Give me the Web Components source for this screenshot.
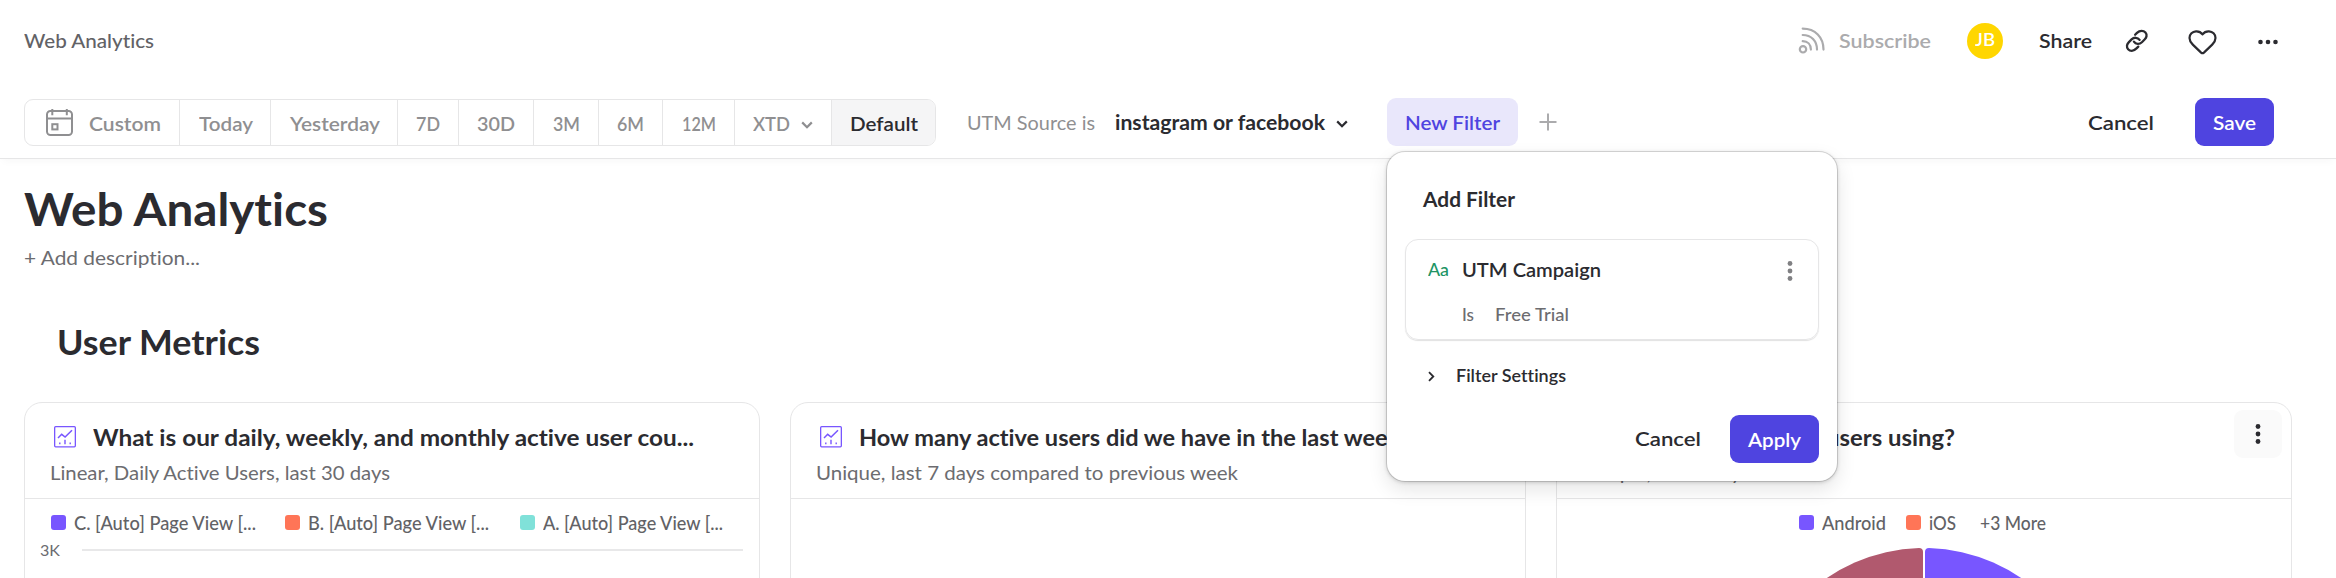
<!DOCTYPE html>
<html lang="en">
<head>
<meta charset="utf-8">
<title>Web Analytics</title>
<style>
  html, body { margin: 0; height: 100%; overflow: hidden; background: #fff; }
  body { font-family: Lato, "Open Sans", sans-serif; font-size: 20px; font-variant-ligatures: none; color: #2b2b30; }
</style>
</head>
<body>
<analytics-page></analytics-page>
<script>
const define = (name, html, ready) => {
  const tpl = document.createElement('template');
  tpl.innerHTML = html;
  customElements.define(name, class extends HTMLElement {
    constructor() {
      super();
      this.attachShadow({ mode: 'open' }).append(tpl.content.cloneNode(true));
    }
    connectedCallback() { if (ready) ready(this, this.shadowRoot); }
  });
};

/* Label stretched to fill a given width: w = width, s = font size, wt = weight, l = left gap */
define('fit-label', `
  <style>
    :host { display: block; flex: none; white-space: nowrap; }
    span { display: inline-block; margin-left: -.5px; transform-origin: 0 50%; }
  </style><span><slot></slot></span>`, (el, root) => {
  const span = root.querySelector('span');
  const w = parseFloat(el.getAttribute('w'));
  if (el.hasAttribute('s')) el.style.fontSize = el.getAttribute('s') + 'px';
  if (el.hasAttribute('wt')) el.style.fontWeight = el.getAttribute('wt');
  if (el.hasAttribute('l')) el.style.marginLeft = el.getAttribute('l') + 'px';
  el.style.width = w + 'px';
  const fit = () => {
    span.style.transform = 'none';
    const natural = span.getBoundingClientRect().width;
    if (natural) span.style.transform = 'scaleX(' + ((w + 1) / natural).toFixed(4) + ')';
  };
  requestAnimationFrame(fit);
  queueMicrotask(fit);
});

const ICONS = {
  calendar: [27, 27, '<g fill="none" stroke="currentColor" stroke-width="2"><rect x="1" y="2" width="25" height="24" rx="3.5"/><path d="M1 9.5h25M6.3 0v6.3M20.8 0v6.3"/><rect x="6.3" y="15.2" width="5.2" height="5.2"/></g>'],
  chevron: [12, 8, '<path d="M1.2 1.4 6 6.2l4.800-4.800" fill="none" stroke="currentColor" stroke-width="2.2"/>'],
  right: [7, 11, '<path d="M1 1.200 5.300 5.500 1 9.800" fill="none" stroke="currentColor" stroke-width="1.800"/>'],
  plus: [18, 18, '<path d="M9 .5v17M.5 9h17" fill="none" stroke="currentColor" stroke-width="2"/>'],
  rss: [28, 28, '<g fill="none" stroke="currentColor" stroke-width="2.200" stroke-linecap="round"><circle cx="5" cy="22.300" r="3.200"/><path d="M4.700 1.600c12.500 0 20.800 8.500 20.800 21M4.700 8c8.500 0 14.300 6 14.300 14.600M4.700 14.200c5 0 8.200 3.500 8.200 8.400"/></g>'],
  link: [24, 24, '<g fill="none" stroke="currentColor" stroke-width="2.300" stroke-linecap="round"><path d="M10.100 5.800l1.900-1.900c1.300-1.300 2.600-2.100 4.600-2.100 3.200 0 5.400 2.500 4.900 5.400-.2 1.300-.9 2.300-1.900 3.300l-2.700 2.700c-2.400 2.300-6.100 2.200-8-.5"/><path d="M13.300 17.600l-1.800 1.800c-1.300 1.300-2.600 2.400-4.700 2.400-3 0-5.200-2.400-4.800-5.300.2-1.400.9-2.400 1.900-3.400l2.700-2.700c2.400-2.300 6.100-2.200 8 .5"/></g>'],
  heart: [29, 25, '<path d="M14.500 4.300C12.400 1.500 9.700 1.200 8 1.300 4.400 1.500 1.500 4.300 1.500 8c0 2.900 1.500 4.800 3.300 6.600l8.300 8c.9.8 1.900.8 2.800 0l8.300-8c1.800-1.800 3.300-3.700 3.300-6.600 0-3.700-2.900-6.500-6.500-6.700-1.700-.1-4.400.2-6.500 3z" fill="none" stroke="currentColor" stroke-width="2.200" stroke-linejoin="round"/>'],
  more: [20, 6, '<g fill="currentColor"><circle cx="2.500" cy="3" r="2.300"/><circle cx="10" cy="3" r="2.300"/><circle cx="17.500" cy="3" r="2.300"/></g>'],
  kebab: [6, 20, '<g fill="currentColor"><circle cx="3" cy="2.500" r="2.400"/><circle cx="3" cy="10" r="2.400"/><circle cx="3" cy="17.500" r="2.400"/></g>'],
  chart: [22, 22, '<g fill="none" stroke="currentColor"><rect x=".65" y=".65" width="20.700" height="20.200" rx="1" stroke-width="1.300"/><path d="M4 12l3.700-3.700 3.400 2.700L18 4.200" stroke-width="1.500"/><path d="M5.800 16.400v1.800M11 13.800v4.400M16.200 16.400v1.800" stroke-width="1.400"/></g>']
};
define('ui-icon', `<style>:host { display: block; flex: none; } svg { display: block; }</style><div></div>`, (el, root) => {
  const [w, h, body] = ICONS[el.getAttribute('name')];
  root.querySelector('div').innerHTML = `<svg width="${w}" height="${h}" viewBox="0 0 ${w} ${h}">${body}</svg>`;
});

define('ui-button', `
  <style>
    :host { display: flex; align-items: center; justify-content: center; flex: none; box-sizing: border-box;
      height: 48px; padding-bottom: 1px; border-radius: 9px; background: #4f44e0; color: #fff; font-weight: 600; }
    :host([soft]) { background: #e9e7fb; color: #4f44e0; }
  </style><slot></slot>`);

define('user-avatar', `
  <style>
    :host { display: flex; align-items: center; justify-content: center; width: 36px; height: 36px;
      border-radius: 50%; background: #ffd600; color: #fff; flex: none; }
  </style><slot></slot>`);

define('range-item', `
  <style>
    :host { display: flex; align-items: center; box-sizing: border-box; height: 45px; padding-top: 1px;
      border-right: 1px solid #e6e6e7; color: #8f8f91; font-weight: 600; }
    :host([selected]) { background: #f5f5f6; color: #2b2b30; border-right: 0; }
  </style><slot></slot>`);

define('range-picker', `
  <style>
    :host { display: flex; box-sizing: border-box; width: 912px; height: 47px; margin-top: 1px; flex: none;
      border: 1px solid #e6e6e7; border-radius: 9px; overflow: hidden; }
  </style>
  <range-item style="width:155px"><ui-icon name="calendar" style="margin-left:21px;margin-top:-1px"></ui-icon><fit-label w="71" l="16">Custom</fit-label></range-item>
  <range-item style="width:91px"><fit-label w="53" l="19">Today</fit-label></range-item>
  <range-item style="width:127px"><fit-label w="89" l="19">Yesterday</fit-label></range-item>
  <range-item style="width:61px"><fit-label w="23" l="18">7D</fit-label></range-item>
  <range-item style="width:75px"><fit-label w="37" l="18">30D</fit-label></range-item>
  <range-item style="width:65px"><fit-label w="26" l="19">3M</fit-label></range-item>
  <range-item style="width:64px"><fit-label w="26" l="18">6M</fit-label></range-item>
  <range-item style="width:72px"><fit-label w="33" l="19">12M</fit-label></range-item>
  <range-item style="width:97px"><fit-label w="36" l="18">XTD</fit-label><ui-icon name="chevron" style="margin-left:12px;margin-top:3px"></ui-icon></range-item>
  <range-item selected style="flex:1"><fit-label w="67" l="18">Default</fit-label></range-item>`);

define('page-header', `
  <style>
    :host { display: block; box-sizing: border-box; height: 159px; border-bottom: 1px solid #e6e6e7;
      box-shadow: 0 5px 8px -3px rgba(0,0,0,.035); background: #fff; }
    .row { display: flex; align-items: center; padding-left: 24px; }
    .top { height: 81px; font-weight: 600; }
    .top fit-label { margin-bottom: 2px; }
    .tools { height: 48px; margin-top: 17px; align-items: flex-start; }
    .group { display: flex; align-items: center; height: 48px; }
    .push { margin-left: auto; display: flex; align-items: center; }
    .muted { color: #8f8f91; }
    .dim { color: #ababad; display: flex; align-items: center; }
  </style>
  <div class="row top">
    <fit-label w="129" wt="500" style="color:#626266">Web Analytics</fit-label>
    <div class="push">
      <div class="dim"><ui-icon name="rss"></ui-icon><fit-label w="91" l="14">Subscribe</fit-label></div>
      <user-avatar style="margin-left:36px"><fit-label w="19" s="17" wt="600">JB</fit-label></user-avatar>
      <fit-label w="52" l="37">Share</fit-label>
      <ui-icon name="link" style="margin-left:33px;margin-top:1px"></ui-icon>
      <ui-icon name="heart" style="margin-left:39px;margin-top:3px"></ui-icon>
      <ui-icon name="more" style="margin-left:41px;margin-right:58.500px;margin-top:3px"></ui-icon>
    </div>
  </div>
  <div class="row tools">
    <range-picker></range-picker>
    <div class="group">
      <fit-label class="muted" w="127" l="31">UTM Source is</fit-label>
      <fit-label w="209" l="21.500" wt="700">instagram or facebook</fit-label>
      <ui-icon name="chevron" style="margin-left:11px;margin-top:3px"></ui-icon>
      <ui-button soft style="width:131px;margin-left:39.500px"><fit-label w="94">New Filter</fit-label></ui-button>
      <ui-icon name="plus" style="margin-left:21px;color:#ababad"></ui-icon>
    </div>
    <div class="group push">
      <fit-label w="65" wt="600">Cancel</fit-label>
      <ui-button style="width:79px;margin-left:42px;margin-right:62px"><fit-label w="42">Save</fit-label></ui-button>
    </div>
  </div>`);

define('report-card', `
  <style>
    :host { display: block; box-sizing: border-box; height: 400px; border: 1px solid #e6e6e7; border-radius: 18px; background: #fff; }
    header { display: flex; justify-content: space-between; box-sizing: border-box; height: 96px; border-bottom: 1px solid #e6e6e7; }
    .text { padding-top: 20px; }
    .title { display: flex; height: 28px; line-height: 28px; padding-left: 29px; }
    .title ui-icon { color: #7856ff; margin-top: 3px; }
    .sub { height: 26px; line-height: 26px; margin: 8px 0 0 25px; color: #6c6c70; }
  </style>
  <header>
    <div class="text">
      <div class="title"><ui-icon name="chart"></ui-icon><slot name="title"></slot></div>
      <div class="sub"><slot name="sub"></slot></div>
    </div>
    <slot name="action"></slot>
  </header>
  <slot></slot>`);

define('legend-row', `
  <style>
    :host { display: flex; align-items: center; box-sizing: border-box; height: 41px; padding-top: 6px;
      color: #626266; font-size: 18.500px; font-weight: 500; }
  </style><slot></slot>`);

define('legend-swatch', `<style>:host { display: block; flex: none; width: 15px; height: 15px; border-radius: 3px; }</style>`);

define('axis-line', `
  <style>
    :host { display: flex; align-items: center; height: 20px; line-height: 20px; color: #6c6c70; }
    i { display: block; width: 661px; height: 2px; margin-left: 23px; background: #e8e8e9; }
  </style><slot></slot><i></i>`);

define('pie-chart', `
  <style>:host { display: block; margin: 7.500px 0 0 194px; } svg { display: block; }</style>
  <svg width="346" height="346" viewBox="0 0 346 346">
    <path d="M174 4q0-4 4-4A172 172 0 0 1 345 172H174z" fill="#7856ff"/>
    <path d="M172 4q0-4-4-4A172 172 0 0 0 1 172H172z" fill="#b1596e"/>
  </svg>`);

define('card-menu', `
  <style>
    :host { display: flex; align-items: center; justify-content: center; width: 48px; height: 48px; margin: 7px 9px 0 0;
      border-radius: 9px; background: #fafafa; }
  </style><ui-icon name="kebab"></ui-icon>`);

define('filter-popup', `
  <style>
    :host { display: block; box-sizing: border-box; width: 450px; height: 329px; padding: 35px 18px 0; border-radius: 18px; background: #fff;
      box-shadow: 0 0 0 1px rgba(0,0,0,.13), 0 1px 4px rgba(0,0,0,.2), 0 8px 20px rgba(0,0,0,.11); }
    .row { display: flex; align-items: center; }
    .head { height: 24px; line-height: 24px; margin-left: 18px; }
    .box { box-sizing: border-box; height: 101px; margin-top: 28px; border: 1px solid #e6e6e7; border-radius: 13px;
      box-shadow: 0 1px 1px rgba(0,0,0,.12); }
    .prop { height: 28px; padding: 15px 25px 0 22px; }
    .prop ui-icon { margin-left: auto; color: #808083; margin-top: 4px; }
    .cond { height: 24px; margin-top: 19px; padding-left: 56px; color: #6c6c70; }
    .settings { height: 24px; margin: 23px 0 0 22.500px; }
    .actions { justify-content: flex-end; margin-top: 28px; }
    .actions > fit-label { margin-bottom: 2px; }
  </style>
  <div class="head"><fit-label w="91" wt="700">Add Filter</fit-label></div>
  <div class="box">
    <div class="row prop">
      <fit-label w="20" s="18" wt="500" style="color:#219464">Aa</fit-label>
      <fit-label w="138" l="14" wt="600">UTM Campaign</fit-label>
      <ui-icon name="kebab"></ui-icon>
    </div>
    <div class="row cond"><fit-label w="11" s="18" wt="500">Is</fit-label><fit-label w="73" l="22.500" s="18" wt="500">Free Trial</fit-label></div>
  </div>
  <div class="row settings"><ui-icon name="right" style="margin-top:3px"></ui-icon><fit-label w="109" l="21.500" s="18" wt="600">Filter Settings</fit-label></div>
  <div class="row actions">
    <fit-label w="65" wt="600">Cancel</fit-label>
    <ui-button style="width:89px;margin-left:30px"><fit-label w="52">Apply</fit-label></ui-button>
  </div>`);

define('analytics-page', `
  <style>
    :host { display: block; position: relative; height: 578px; overflow: hidden; }
    main { padding: 22px 0 0 24px; }
    h1, h2, p { margin: 0; }
    h1 { height: 56px; line-height: 56px; }
    p { height: 28px; line-height: 28px; margin-top: 6px; color: #6c6c70; }
    h2 { height: 40px; line-height: 40px; margin: 51px 0 0 33px; }
    .cards { display: grid; grid-template-columns: repeat(3, 736px); gap: 30px; margin-top: 40px; }
    filter-popup { position: absolute; left: 1387px; top: 152px; }
  </style>
  <page-header></page-header>
  <main>
    <h1><fit-label w="303" s="46" wt="700">Web Analytics</fit-label></h1>
    <p><fit-label w="175" wt="400">+ Add description...</fit-label></p>
    <h2><fit-label w="202" s="34.500" wt="700">User Metrics</fit-label></h2>
    <div class="cards">
      <report-card>
        <fit-label slot="title" w="600" l="17" s="23" wt="700">What is our daily, weekly, and monthly active user cou...</fit-label>
        <fit-label slot="sub" w="339">Linear, Daily Active Users, last 30 days</fit-label>
        <legend-row>
          <legend-swatch style="background:#7856ff;margin-left:26px"></legend-swatch><fit-label w="181" l="8">C. [Auto] Page View [...</fit-label>
          <legend-swatch style="background:#ff7557;margin-left:30px"></legend-swatch><fit-label w="180" l="8">B. [Auto] Page View [...</fit-label>
          <legend-swatch style="background:#80e1d9;margin-left:32px"></legend-swatch><fit-label w="179" l="8">A. [Auto] Page View [...</fit-label>
        </legend-row>
        <axis-line><fit-label w="19" l="15" s="16">3K</fit-label></axis-line>
      </report-card>
      <report-card>
        <fit-label slot="title" w="551" l="17" s="23" wt="700">How many active users did we have in the last week?</fit-label>
        <fit-label slot="sub" w="421">Unique, last 7 days compared to previous week</fit-label>
      </report-card>
      <report-card>
        <fit-label slot="title" w="329" l="17" s="23" wt="700">What platform are users using?</fit-label>
        <fit-label slot="sub" w="167">Unique, last 7 days</fit-label>
        <card-menu slot="action"></card-menu>
        <legend-row>
          <legend-swatch style="background:#7856ff;margin-left:242px"></legend-swatch><fit-label w="63" l="8">Android</fit-label>
          <legend-swatch style="background:#ff7557;margin-left:21px"></legend-swatch><fit-label w="26" l="8">iOS</fit-label>
          <fit-label w="65" l="25.500">+3 More</fit-label>
        </legend-row>
        <pie-chart></pie-chart>
      </report-card>
    </div>
  </main>
  <filter-popup></filter-popup>`);
</script>
</body>
</html>
